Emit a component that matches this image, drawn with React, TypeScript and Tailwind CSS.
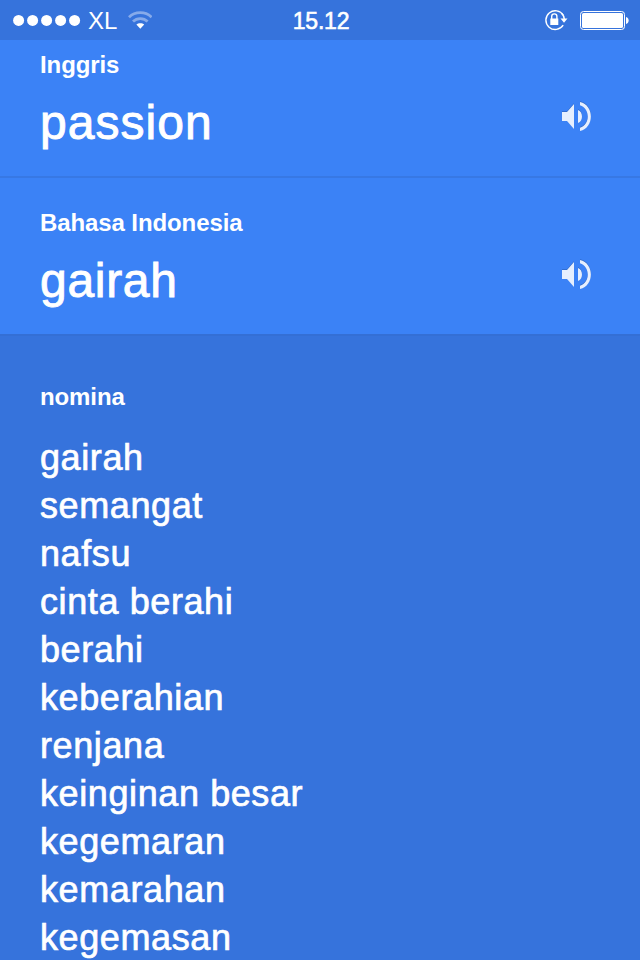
const nouns = [
  'gairah',
  'semangat',
  'nafsu',
  'cinta berahi',
  'berahi',
  'keberahian',
  'renjana',
  'keinginan besar',
  'kegemaran',
  'kemarahan',
  'kegemasan',
];

function SpeakerIcon() {
  const shape = (
    <>
      <path d="M0 10H5L12 2V27L5 19H0Z" />
      <path d="M16 8C21.3 9.8 21.3 19.2 16 21Z" />
      <path d="M18 0C32.5 3.2 32.5 25.8 18 29V25.8C28.4 22.6 28.4 6.4 18 3.2Z" />
    </>
  );
  return (
    <svg className="block h-[31px] w-[31px]" viewBox="0 -1 31 31" aria-hidden="true">
      <g fill="#2f67c3" transform="translate(0 -0.8)">{shape}</g>
      <g fill="#e6effe">{shape}</g>
    </svg>
  );
}

function StatusBar() {
  return (
    <header className="flex h-10 shrink-0 items-center justify-between bg-[#3673dc] pl-[13px] pr-[11px]">
      <div className="flex w-[260px] items-center">
        <svg className="h-[12px] w-[68px]" viewBox="0 0 68 12" fill="white" aria-hidden="true">
          <circle cx="5.6" cy="6.4" r="5.5" />
          <circle cx="19.6" cy="6.4" r="5.5" />
          <circle cx="33.6" cy="6.4" r="5.5" />
          <circle cx="47.6" cy="6.4" r="5.5" />
          <circle cx="61.6" cy="6.4" r="5.5" />
        </svg>
        <span className="ml-[7px] w-[40px] pt-[2px] text-[24px] leading-[38px]">XL</span>
        <svg className="h-[18px] w-[24px]" viewBox="0 0 24 18" fill="none" aria-hidden="true">
          <path d="M1 6.2C7 .1 17.6.1 23.6 6.2" stroke="#86aaea" strokeWidth="2.8" />
          <path d="M5 10.6C9 6.6 15.6 6.6 19.6 10.6" stroke="#86aaea" strokeWidth="2.8" />
          <path d="M8.4 13.6C10.4 11.7 14.2 11.7 16.2 13.6L12.3 17.8Z" fill="white" />
        </svg>
      </div>
      <time className="pt-[2px] text-[23px] leading-[38px] tracking-[-0.2px] [-webkit-text-stroke:0.6px_white]">15.12</time>
      <div className="flex w-[260px] items-center justify-end">
        <svg className="mr-[12px] h-[22px] w-[24px]" viewBox="0 0 24 22" fill="none" aria-hidden="true">
          <path d="M19.3 6.2A9.4 9.4 0 1 0 19.2 16.2" stroke="white" strokeWidth="1.4" />
          <path d="M17.6 4.2Q20.3 7 20.3 10" stroke="white" strokeWidth="1.4" />
          <path d="M16.5 9.5H23.5L20 13.7Z" fill="white" />
          <path d="M6.3 9.5H14.3V16H6.3Z" fill="white" />
          <path d="M7.7 10V7.5A2.6 2.6 0 0 1 12.9 7.5V10" stroke="white" strokeWidth="1.4" />
        </svg>
        <svg className="h-[20px] w-[49px]" viewBox="0 0 49 20" fill="none" aria-hidden="true">
          <rect x=".5" y="1.5" width="44" height="18" rx="3" stroke="white" />
          <rect x="2" y="3" width="41" height="15" rx="1.6" fill="white" />
          <path d="M46 7C49.5 7.5 49.5 13.5 46 14Z" fill="white" />
        </svg>
      </div>
    </header>
  );
}

type PhraseProps = { language: string; text: string; spacing: string; tracking: string };

function Phrase({ language, text, spacing, tracking }: PhraseProps) {
  return (
    <section className={`flex shrink-0 items-start justify-between bg-[#3b82f6] pl-10 pr-[47px] ${spacing}`}>
      <div>
        <h2 className="text-[24px] font-bold leading-7 tracking-[-0.1px]">{language}</h2>
        <p className={`mt-4 text-[48px] leading-[56px] [-webkit-text-stroke:0.9px_white] ${tracking}`}>{text}</p>
      </div>
      <button className="mt-[50px]" aria-label={language}>
        <SpeakerIcon />
      </button>
    </section>
  );
}

export default function App() {
  return (
    <main className="flex h-[960px] w-[640px] flex-col overflow-hidden bg-[#3673dc] font-['Liberation_Sans',Arial,sans-serif] text-white">
      <StatusBar />
      <Phrase language="Inggris" text="passion" spacing="h-[136px] pt-[11px]" tracking="tracking-[1.05px]" />
      <div className="h-[2px] shrink-0 bg-[#3778e4]" />
      <Phrase language="Bahasa Indonesia" text="gairah" spacing="h-[156px] pt-[31px]" tracking="tracking-[0.7px]" />
      <section className="shrink-0 border-t-2 border-[#346fd5] pl-10 pt-[47px]">
        <h3 className="text-[24px] font-bold leading-7 tracking-[-0.1px]">nomina</h3>
        <ul className="mt-[23px] text-[36px] leading-[48px] tracking-[0.6px] [-webkit-text-stroke:0.7px_white]">
          {nouns.map((noun) => (
            <li key={noun} className="whitespace-nowrap">{noun}</li>
          ))}
        </ul>
      </section>
    </main>
  );
}
